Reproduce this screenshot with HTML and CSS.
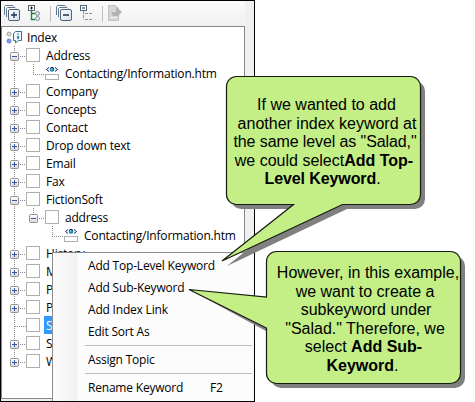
FILE: index.html
```html
<!DOCTYPE html>
<html lang="en">
<head>
<meta charset="utf-8">
<title>Index keywords</title>
<link rel="stylesheet" href="styles.css">
</head>
<body>
<svg class="defs" width="0" height="0" aria-hidden="true">
  <defs>
    <linearGradient id="face" x1="0" y1="0" x2="0" y2="1"><stop offset="0" stop-color="#fff"/><stop offset="1" stop-color="#d8d8d8"/></linearGradient>
    <linearGradient id="paper" x1="0" y1="0" x2="1" y2="1"><stop offset="0" stop-color="#fff"/><stop offset="1" stop-color="#d3dfef"/></linearGradient>
    <symbol id="plus" viewBox="0 0 9 9"><rect x=".5" y=".5" width="8" height="8" rx="1" fill="url(#face)" stroke="#919191"/><path d="M2 4.5h5M4.500 2v5" stroke="#3555a5"/></symbol>
    <symbol id="minus" viewBox="0 0 9 9"><rect x=".5" y=".5" width="8" height="8" rx="1" fill="url(#face)" stroke="#919191"/><path d="M2 4.500h5" stroke="#3555a5"/></symbol>
    <symbol id="link" viewBox="0 0 14 14"><path d="M4 1.500L1.500 3.500 4 5.500M10 1.500l2.500 2-2.500 2" fill="none" stroke="#1b1b95"/><circle cx="7" cy="3.500" r="2.300" fill="#168fa0"/><path d="M5 2.500Q7 0 9 2.500" fill="none" stroke="#101070"/><circle cx="6.500" cy="3" r=".7" fill="#c8ffff"/><rect x=".5" y="8.500" width="13" height="5" fill="#fff" stroke="#b0b0b0"/></symbol>
  </defs>
</svg>
<main class="window">
  <div class="toolbar">
    <svg class="tool" width="16" height="16"><path d="M.5 10V1.500l1-1H9l1 1M2.500 12V3.500l1-1H11l1 1" fill="none" stroke="#61788c"/><rect x="4.500" y="4.500" width="11" height="11" rx="1.500" fill="url(#paper)" stroke="#4b6479"/><path d="M7 10h6M10 7v6" stroke="#19334b" stroke-width="1.300"/></svg>
    <svg class="tool second" width="13" height="16"><rect x=".5" y=".5" width="6" height="5" fill="#fff" stroke="#4f6472"/><path d="M2 3h3M3.500 1.500v3" stroke="#222"/><path d="M3.500 6v8.500H7M3.500 8.500H7" fill="none" stroke="#228038" stroke-width="1.400"/><circle cx="9.500" cy="8.500" r="1.900" fill="#fff" stroke="#607488"/><circle cx="9.500" cy="13.500" r="1.900" fill="#fff" stroke="#607488"/></svg>
    <i class="divider"></i>
    <svg class="tool" width="16" height="16"><path d="M.5 10V1.500l1-1H9l1 1M2.500 12V3.500l1-1H11l1 1" fill="none" stroke="#61788c"/><rect x="4.500" y="4.500" width="11" height="11" rx="1.500" fill="url(#paper)" stroke="#4b6479"/><path d="M7 10h6" stroke="#19334b" stroke-width="1.500"/></svg>
    <svg class="tool second" width="13" height="16"><rect x=".5" y=".5" width="6" height="5" fill="#fff" stroke="#4f6472"/><path d="M2 3h3" stroke="#222"/><path d="M3.500 6v8.500M5 8.500h8M5 14.500h8" fill="none" stroke="#8a949b" stroke-dasharray="3 1"/></svg>
    <i class="divider"></i>
    <svg class="tool" width="15" height="16"><path d="M.5.500h7l3 3v12H.5z" fill="#d6d6d6" stroke="#c1c1c1"/><path d="M3 7h5V2l6 5-4 4H5z" fill="#b3b3b3"/><path d="M2 12.500h7" stroke="#eee"/></svg>
  </div>
  <div class="tree">
    <div class="row root"><svg width="20" height="14"><circle cx="3" cy="4" r="2" fill="#ddd" stroke="#a3a3a3"/><circle cx="3" cy="11" r="2" fill="#7d95ed" stroke="#657dd4"/><path d="M9.500 1.500h6v9h-3L9.500 13V10.500H7.500v-7z" fill="#eef8ff" stroke="#37718d"/><path d="M12 3.500v1M12 6v3" stroke="#125795" stroke-width="1.500"/></svg><span>Index</span></div>
    <div class="branches">
      <div class="row"><svg class="toggle"><use href="#minus"/></svg><i class="dots"></i><i class="box"></i><span>Address</span></div>
      <div class="row child leaf"><i class="elbow"></i><svg class="link"><use href="#link"/></svg><span>Contacting/Information.htm</span></div>
      <div class="row"><svg class="toggle"><use href="#plus"/></svg><i class="dots"></i><i class="box"></i><span>Company</span></div>
      <div class="row"><svg class="toggle"><use href="#plus"/></svg><i class="dots"></i><i class="box"></i><span>Concepts</span></div>
      <div class="row"><svg class="toggle"><use href="#plus"/></svg><i class="dots"></i><i class="box"></i><span>Contact</span></div>
      <div class="row"><svg class="toggle"><use href="#plus"/></svg><i class="dots"></i><i class="box"></i><span>Drop down text</span></div>
      <div class="row"><svg class="toggle"><use href="#plus"/></svg><i class="dots"></i><i class="box"></i><span>Email</span></div>
      <div class="row"><svg class="toggle"><use href="#plus"/></svg><i class="dots"></i><i class="box"></i><span>Fax</span></div>
      <div class="row"><svg class="toggle"><use href="#minus"/></svg><i class="dots"></i><i class="box"></i><span>FictionSoft</span></div>
      <div class="row child stem"><svg class="toggle"><use href="#minus"/></svg><i class="dots"></i><i class="box"></i><span>address</span></div>
      <div class="row grandchild leaf"><i class="elbow"></i><svg class="link"><use href="#link"/></svg><span>Contacting/Information.htm</span></div>
      <div class="row"><svg class="toggle"><use href="#plus"/></svg><i class="dots"></i><i class="box"></i><span>History</span></div>
      <div class="row"><svg class="toggle"><use href="#plus"/></svg><i class="dots"></i><i class="box"></i><span>M</span></div>
      <div class="row"><svg class="toggle"><use href="#plus"/></svg><i class="dots"></i><i class="box"></i><span>P</span></div>
      <div class="row"><svg class="toggle"><use href="#plus"/></svg><i class="dots"></i><i class="box"></i><span>P</span></div>
      <div class="row selected"><i class="dots long"></i><i class="box"></i><span>S</span></div>
      <div class="row"><svg class="toggle"><use href="#plus"/></svg><i class="dots"></i><i class="box"></i><span>S</span></div>
      <div class="row"><svg class="toggle"><use href="#plus"/></svg><i class="dots"></i><i class="box"></i><span>W</span></div>
    </div>
  </div>
  <div class="menu">
    <div class="item">Add Top-Level Keyword</div>
    <div class="item">Add Sub-Keyword</div>
    <div class="item">Add Index Link</div>
    <div class="item">Edit Sort As</div>
    <hr>
    <div class="item">Assign Topic</div>
    <hr>
    <div class="item"><span class="command">Rename Keyword</span><span>F2</span></div>
  </div>
</main>
<svg class="bubbles" width="475" height="402">
  <path class="shadow" d="M241 81H415a10 10 0 0 1 10 10V199a10 10 0 0 1-10 10H347L227 266 298 209H241a10 10 0 0 1-10-10V91a10 10 0 0 1 10-10z"/>
  <path class="bubble" d="M236.500 76.500H410.500a10 10 0 0 1 10 10V194.500a10 10 0 0 1-10 10H342.500L222 261 293.500 204.500H236.500a10 10 0 0 1-10-10V86.500a10 10 0 0 1 10-10z"/>
  <path class="shadow" d="M281 256H455a10 10 0 0 1 10 10V378a10 10 0 0 1-10 10H281a10 10 0 0 1-10-10V266a10 10 0 0 1 10-10z"/>
  <path class="shadow" d="M190 290L266 331V327z"/>
  <path class="bubble" d="M276.500 251.500H450.500a10 10 0 0 1 10 10V373.500a10 10 0 0 1-10 10H276.500a10 10 0 0 1-10-10V328L189 289.500 266.500 297V261.500a10 10 0 0 1 10-10z"/>
</svg>
<div class="note first">
  <p class="l1">If we wanted to add</p>
  <p class="l2">another index keyword at</p>
  <p class="l3">the same level as "Salad,"</p>
  <p class="l4">we could select<b>Add Top-</b></p>
  <p class="l5"><b>Level Keyword</b>.</p>
</div>
<div class="note other">
  <p class="m1">However, in this example,</p>
  <p class="m2">we want to create a</p>
  <p class="m3">subkeyword under</p>
  <p class="m4">"Salad." Therefore, we</p>
  <p class="m5">select <b>Add Sub-</b></p>
  <p class="m6"><b>Keyword</b>.</p>
</div>
</body>
</html>
```
FILE: styles.css
```css
* { box-sizing: border-box; }
body { margin: 0; width: 475px; height: 402px; overflow: hidden; position: relative; background: #fff; color: #000; }
.defs { position: absolute; }
.window { position: relative; width: 255px; height: 402px; border: 1px solid #000; background: #f0f0f0; overflow: hidden; font: 12px/18px "Open Sans", "Noto Sans", sans-serif; letter-spacing: -.2px; }
.toolbar { width: 244px; height: 25px; padding: 4px 0 0 3px; display: flex; background: linear-gradient(#fbfbfb, #f1f1f1); }
.tool { flex: none; }
.second { margin-left: 8px; }
.divider { width: 1px; height: 16px; background: #bdbdbd; margin: 1px 5px 0 9px; flex: none; }
.tree { width: 244px; height: 373px; border: 1px solid #828790; background: #fff; padding-top: 1px; }
.row { height: 18px; display: flex; align-items: center; white-space: nowrap; }
.row span { margin-left: 4px; padding: 1px 2px 0; height: 18px; }
.root { padding-left: 4px; }
.root span { margin-left: -1px; }
.branches { background: repeating-linear-gradient(#888 0 1px, transparent 1px 2px) 12px 0 / 1px 315px no-repeat; }
.branches .row { padding-left: 8px; }
.toggle { width: 9px; height: 9px; flex: none; margin-top: 2px; }
.dots { width: 7px; height: 1px; margin-top: 2px; background: repeating-linear-gradient(90deg, transparent 0 1px, #888 1px 2px); flex: none; }
.long { width: 12px; margin-left: 4px; }
.box { width: 14px; height: 14px; border: 1px solid #b0b0b0; background: #fff; flex: none; }
.branches .child { padding-left: 27px; }
.branches .grandchild { padding-left: 46px; }
.branches .leaf { padding-left: 31px; }
.branches .grandchild.leaf { padding-left: 50px; }
.stem { background: repeating-linear-gradient(#888 0 1px, transparent 1px 2px) 31px 0 / 1px 6px no-repeat; }
.elbow { width: 12px; height: 11px; align-self: flex-start; background: repeating-linear-gradient(#888 0 1px, transparent 1px 2px) 0 0 / 1px 11px no-repeat, repeating-linear-gradient(90deg, #888 0 1px, transparent 1px 2px) 0 10px / 12px 1px no-repeat; }
.link { width: 14px; height: 14px; flex: none; }
.selected span { background: #3399ff; color: #fff; width: 40px; }
.menu { position: absolute; left: 51px; top: 251px; width: 202px; height: 160px; border: 1px solid #8b8b8b; border-right-color: #f5f5f5; background: linear-gradient(90deg, #fcfcfc, #f0f0f0 24px, #fcfcfc 25px); padding-top: 2px; }
.item { height: 22px; line-height: 22px; padding-left: 35px; display: flex; white-space: nowrap; }
.menu hr { height: 1px; border: 0; margin: 2px 1px 3px 32px; background: #bdbdbd; }
.command { width: 122px; }
.bubbles { position: absolute; left: 0; top: 0; }
.bubble { fill: #c3ef86; stroke: #161b0e; stroke-width: 1.200; }
.shadow { fill: #808080; }
.note { position: absolute; width: 194px; text-align: center; font: 16px/18.500px "Liberation Sans", Arial, sans-serif; white-space: nowrap; }
.note p { margin: 0; display: flex; justify-content: center; white-space: pre; }
.first { left: 228px; top: 96px; }
.other { left: 268px; top: 264px; }
.note .l1 { padding-left: 3px; }
.note .l2 { padding-left: 4px; }
.note .l3 { letter-spacing: -.1px; }
.note .l4 { padding-right: 2px; }
.note .l5 { padding-right: 5px; letter-spacing: -.1px; }
.note .m1 { padding-left: 6px; }
.note .m3 { padding-left: 2px; }
.note .m5 { padding-right: 3px; }
.note .m6 { padding-right: 5px; }
```
